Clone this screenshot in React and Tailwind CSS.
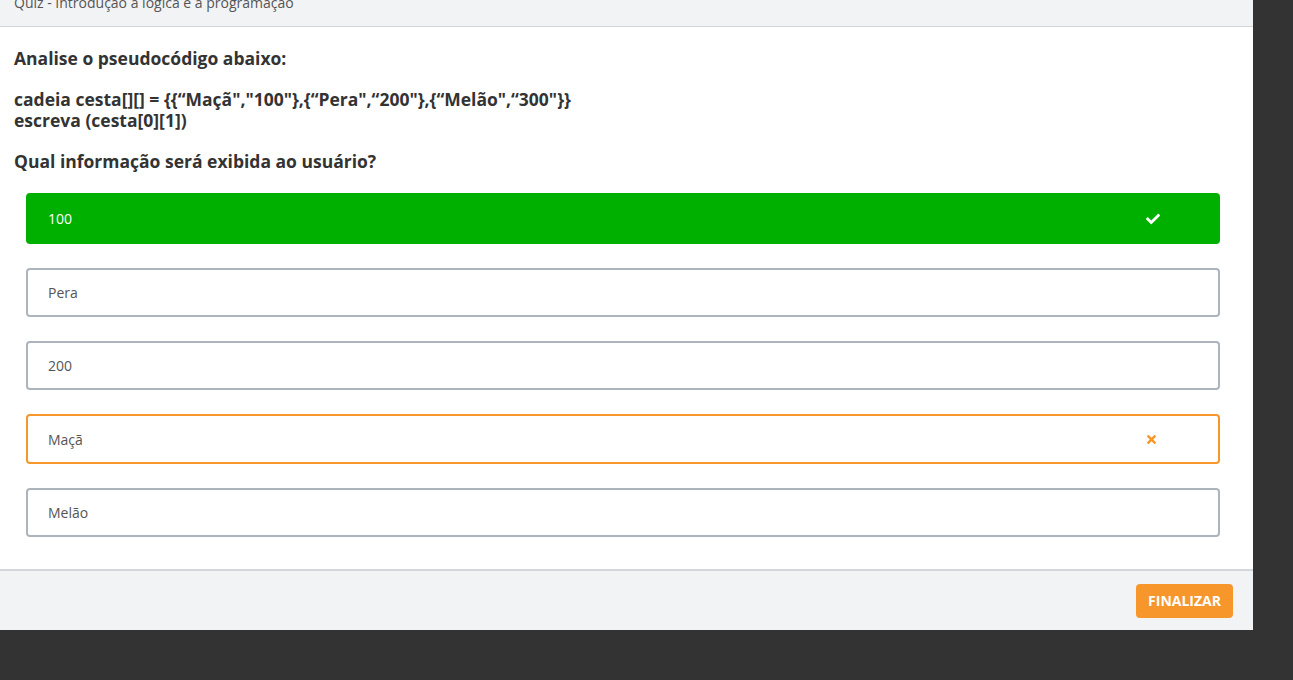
import { FaCheck, FaTimes } from 'react-icons/fa'

const options = [
  { label: '100', state: 'correct' },
  { label: 'Pera' },
  { label: '200' },
  { label: 'Maçã', state: 'wrong' },
  { label: 'Melão' },
]

function Option({ label, state }) {
  const base = 'flex items-center justify-between rounded-[4px] border-2 pl-[20px] text-[14px]'
  if (state === 'correct') {
    return (
      <div className={`${base} h-[51px] pr-[58px] border-[#00b000] bg-[#00b000] text-white`}>
        <span>{label}</span>
        <FaCheck className="text-[14px]" />
      </div>
    )
  }
  if (state === 'wrong') {
    return (
      <div className={`${base} h-[50px] pr-[60px] border-[#f7962b] bg-white text-[#555]`}>
        <span>{label}</span>
        <FaTimes className="text-[13px] text-[#f7962b]" />
      </div>
    )
  }
  return (
    <div className={`${base} h-[49px] border-[#adb4bc] bg-white text-[#555]`}>
      <span>{label}</span>
    </div>
  )
}

export default function App() {
  return (
    <div className="min-h-[680px] bg-[#333333]" style={{ fontFamily: '"Open Sans", sans-serif' }}>
      <div className="w-[1253px] bg-white">
        {/* Header (scrolled partially off-screen) */}
        <div className="h-[27px] overflow-hidden border-b border-[#d3d6da] bg-[#f2f3f5] px-[14px]">
          <p className="mt-[-7px] text-[14px] leading-[20px] text-[#555]">Quiz - Introdução à lógica e à programação</p>
        </div>

        {/* Question */}
        <div className="px-[14px] pt-[18px] text-[#333] font-bold text-[17.5px]">
          <p className="leading-[26px]">Analise o pseudocódigo abaixo:</p>
          <div className="mt-[18px] leading-[21px]">
            <p>cadeia cesta[][] = {'{{“Maçã","100"},{“Pera",“200"},{“Melão",“300"}}'}</p>
            <p>escreva (cesta[0][1])</p>
          </div>
          <p className="mt-[17px] leading-[26px]">Qual informação será exibida ao usuário?</p>
        </div>

        {/* Options */}
        <div className="flex flex-col gap-[24px] pl-[26px] pr-[33px] pt-[19px] pb-[32px]">
          {options.map((o) => (
            <Option key={o.label} {...o} />
          ))}
        </div>

        {/* Footer */}
        <div className="flex h-[61px] items-center justify-end border-t-2 border-[#d3d6da] bg-[#f2f3f5] pr-[20px]">
          <button className="h-[34px] rounded-[4px] bg-[#f7962b] px-[12px] text-[14px] font-bold uppercase text-white">
            Finalizar
          </button>
        </div>
      </div>
    </div>
  )
}
